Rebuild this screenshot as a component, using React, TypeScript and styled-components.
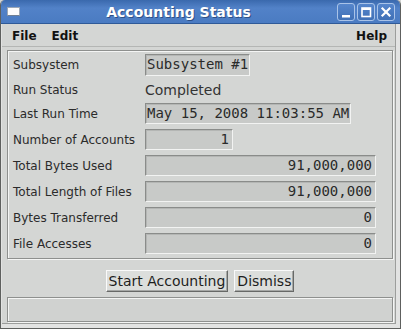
import styled, { createGlobalStyle } from "styled-components";

const GlobalStyle = createGlobalStyle`
  html, body {
    margin: 0;
    padding: 0;
    background: #d4d6d4;
  }
`;

interface Row {
  label: string;
  value: string;
  width?: number;
  align?: "left" | "right";
  plain?: boolean;
}

const rows: Row[] = [
  { label: "Subsystem", value: "Subsystem #1", width: 105 },
  { label: "Run Status", value: "Completed", plain: true },
  { label: "Last Run Time", value: "May 15, 2008 11:03:55 AM", width: 206 },
  { label: "Number of Accounts", value: "1", width: 88, align: "right" },
  { label: "Total Bytes Used", value: "91,000,000", width: 231, align: "right" },
  { label: "Total Length of Files", value: "91,000,000", width: 231, align: "right" },
  { label: "Bytes Transferred", value: "0", width: 231, align: "right" },
  { label: "File Accesses", value: "0", width: 231, align: "right" },
];

export default function App() {
  return (
    <>
      <GlobalStyle />
      <Window>
        <TitleBar>
          <TitleIcon />
          <TitleText>Accounting Status</TitleText>
          <TitleButtons>
            <TitleButton aria-label="minimize">
              <svg width="16" height="16" viewBox="0 0 16 16">
                <rect x="4" y="11" width="8" height="2.5" fill="#fff" />
              </svg>
            </TitleButton>
            <TitleButton aria-label="maximize">
              <svg width="16" height="16" viewBox="0 0 16 16">
                <rect x="4" y="4" width="8.5" height="8.5" fill="none" stroke="#fff" strokeWidth="1.6" />
                <rect x="4" y="4" width="8.5" height="2" fill="#fff" />
              </svg>
            </TitleButton>
            <TitleButton aria-label="close">
              <svg width="16" height="16" viewBox="0 0 16 16">
                <path d="M4.5 4.5 L11.5 11.5 M11.5 4.5 L4.5 11.5" stroke="#fff" strokeWidth="2.2" strokeLinecap="square" />
              </svg>
            </TitleButton>
          </TitleButtons>
        </TitleBar>

        <Client>
          <MenuBar>
            <MenuItem>File</MenuItem>
            <MenuItem>Edit</MenuItem>
            <MenuItem $right>Help</MenuItem>
          </MenuBar>

          <Content>
            <Panel>
              {rows.map((r) => (
                <FormRow key={r.label} $short={r.plain}>
                  <Label>{r.label}</Label>
                  {r.plain ? (
                    <PlainValue>{r.value}</PlainValue>
                  ) : (
                    <Field $w={r.width || 100} $align={r.align || "left"}>
                      {r.value}
                    </Field>
                  )}
                </FormRow>
              ))}
            </Panel>

            <ButtonRow>
              <Button>Start Accounting</Button>
              <Button>Dismiss</Button>
            </ButtonRow>

            <StatusBar />
          </Content>
        </Client>
      </Window>
    </>
  );
}

const Window = styled.div`
  width: 401px;
  height: 329px;
  box-sizing: border-box;
  display: flex;
  flex-direction: column;
  background: #e2e3e2;
  border: 1px solid #5e605e;
  border-top: none;
  border-radius: 5px 5px 0 0;
  overflow: hidden;
  font-family: "DejaVu Sans", "Noto Sans", sans-serif;
`;

const TitleBar = styled.div`
  height: 24px;
  flex-shrink: 0;
  display: flex;
  align-items: center;
  padding: 0 6px 0 7px;
  margin: 0 -1px;
  background: linear-gradient(#3a69ad 0%, #5282c8 35%, #4a7bc2 100%);
  border-bottom: 1px solid #2f5a98;
  box-sizing: border-box;
`;

const TitleIcon = styled.div`
  width: 13px;
  height: 9px;
  background: #fcfcfc;
  border: 1px solid #9aa6b6;
  border-bottom-color: #6f7f94;
  box-sizing: border-box;
  flex-shrink: 0;
`;

const TitleText = styled.div`
  flex: 1;
  text-align: center;
  color: #ffffff;
  font-weight: bold;
  font-size: 14px;
  text-shadow: 1px 1px 0 rgba(20, 40, 80, 0.55);
`;

const TitleButtons = styled.div`
  display: flex;
  gap: 2px;
`;

const TitleButton = styled.div`
  width: 18px;
  height: 18px;
  box-sizing: border-box;
  border: 1px solid #a9c3e8;
  border-radius: 3px;
  background: linear-gradient(#5686cc, #3f70b6);
  display: flex;
  align-items: center;
  justify-content: center;
`;

const Client = styled.div`
  flex: 1;
  display: flex;
  flex-direction: column;
  margin: 0 4px 4px 1px;
  background: #d4d6d4;
  border-right: 1px solid #9c9e9c;
  border-bottom: 1px solid #9c9e9c;
`;

const MenuBar = styled.div`
  height: 23px;
  box-sizing: border-box;
  display: flex;
  align-items: center;
  gap: 15px;
  padding: 1px 8px 0 10px;
  border-bottom: 1px solid #b4b6b4;
  font-size: 12px;
  font-weight: bold;
  color: #111;
`;

const MenuItem = styled.span<{ $right?: boolean }>`
  margin-left: ${(p) => (p.$right ? "auto" : "0")};
`;

const Content = styled.div`
  flex: 1;
  display: flex;
  flex-direction: column;
  padding: 3px 2px 1px 5px;
`;

const Panel = styled.div`
  display: flex;
  flex-direction: column;
  gap: 5px;
  padding: 3px 15px 4px 5px;
  border: 1px solid #8e908e;
  box-shadow: inset 1px 1px 0 #f4f5f4, 1px 1px 0 #f4f5f4;
`;

const FormRow = styled.div<{ $short?: boolean }>`
  display: grid;
  grid-template-columns: 132px 1fr;
  align-items: center;
  height: ${(p) => (p.$short ? 17 : 21)}px;
  &:first-child {
    height: 22px;
  }
`;

const Label = styled.span`
  font-size: 12px;
  color: #2b2b2b;
  white-space: nowrap;
`;

const PlainValue = styled.span`
  font-size: 14px;
  color: #333;
`;

const Field = styled.div<{ $w: number; $align: "left" | "right" }>`
  width: ${(p) => p.$w}px;
  height: 100%;
  box-sizing: border-box;
  padding: 0 3px 0 1px;
  border: 1px solid;
  border-color: #8a8c8a #f2f3f2 #f2f3f2 #8a8c8a;
  box-shadow: inset 1px 1px 0 #b4b6b4;
  background: #c8cac8;
  font-family: "DejaVu Sans Mono", "Liberation Mono", monospace;
  font-size: 14px;
  line-height: 19px;
  color: #2a2a2a;
  text-align: ${(p) => p.$align};
  white-space: nowrap;
  overflow: hidden;
`;

const ButtonRow = styled.div`
  display: flex;
  justify-content: center;
  gap: 6px;
  margin-top: 11px;
  height: 22px;
`;

const Button = styled.button`
  height: 22px;
  box-sizing: border-box;
  padding: 0 2px;
  margin: 0;
  border: 1px solid;
  border-color: #fafafa #676967 #676967 #fafafa;
  box-shadow: inset -1px -1px 0 #a6a8a6;
  background: #dcdedc;
  font-family: "DejaVu Sans", "Noto Sans", sans-serif;
  font-size: 14px;
  color: #1e1e1e;
  line-height: 18px;
  border-radius: 0;
`;

const StatusBar = styled.div`
  margin-top: 5px;
  height: 25px;
  box-sizing: border-box;
  border: 1px solid #8e908e;
  box-shadow: inset 1px 1px 0 #f4f5f4, 1px 1px 0 #f4f5f4;
  background: #d0d2d0;
`;
